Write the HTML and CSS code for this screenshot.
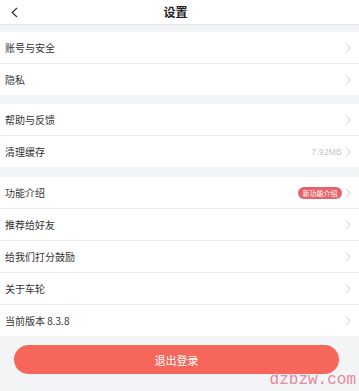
FILE: index.html
```html
<!DOCTYPE html>
<html lang="zh">
<head>
<meta charset="utf-8">
<title>设置</title>
<link rel="stylesheet" href="styles.css">
</head>
<body>
<div class="page">
  <header class="header">
    <div class="back">
      <svg width="7" height="11" viewBox="0 0 7 11"><polyline points="6,1 1.2,5.5 6,10" fill="none" stroke="#333" stroke-width="1.2"/></svg>
    </div>
    <div class="title">设置</div>
    <div></div>
  </header>

  <section class="group g1">
    <div class="row"><span class="label">账号与安全</span><span class="right"><svg class="chev" viewBox="0 0 6 10"><polyline points="1,0.5 5,5 1,9.5"/></svg></span></div>
    <div class="row"><span class="label">隐私</span><span class="right"><svg class="chev" viewBox="0 0 6 10"><polyline points="1,0.5 5,5 1,9.5"/></svg></span></div>
  </section>

  <section class="group g2">
    <div class="row"><span class="label">帮助与反馈</span><span class="right"><svg class="chev" viewBox="0 0 6 10"><polyline points="1,0.5 5,5 1,9.5"/></svg></span></div>
    <div class="row"><span class="label">清理缓存</span><span class="right"><span class="value">7.92MB</span><svg class="chev" viewBox="0 0 6 10"><polyline points="1,0.5 5,5 1,9.5"/></svg></span></div>
  </section>

  <section class="group g3">
    <div class="row"><span class="label">功能介绍</span><span class="right"><span class="badge">新功能介绍</span><svg class="chev" viewBox="0 0 6 10"><polyline points="1,0.5 5,5 1,9.5"/></svg></span></div>
    <div class="row"><span class="label">推荐给好友</span><span class="right"><svg class="chev" viewBox="0 0 6 10"><polyline points="1,0.5 5,5 1,9.5"/></svg></span></div>
    <div class="row"><span class="label">给我们打分鼓励</span><span class="right"><svg class="chev" viewBox="0 0 6 10"><polyline points="1,0.5 5,5 1,9.5"/></svg></span></div>
    <div class="row"><span class="label">关于车轮</span><span class="right"><svg class="chev" viewBox="0 0 6 10"><polyline points="1,0.5 5,5 1,9.5"/></svg></span></div>
    <div class="row"><span class="label">当前版本 8.3.8</span><span class="right"><svg class="chev" viewBox="0 0 6 10"><polyline points="1,0.5 5,5 1,9.5"/></svg></span></div>
  </section>

  <div class="btn-wrap"><button class="logout">退出登录</button></div>

  <div class="watermark">dzbzw.com</div>
</div>
</body>
</html>
```

FILE: styles.css
```css
* { box-sizing: border-box; }
html, body { margin: 0; padding: 0; }
body {
  background: #f3f4f6;
  font-family: "Noto Sans CJK SC", "Noto Sans", sans-serif;
  color: #333;
  width: 359px;
  height: 391px;
  overflow: hidden;
}
.page { position: relative; height: 391px; }
.header {
  height: 25px;
  background: #fff;
  border-bottom: 1px solid #e4e4e6;
  display: grid;
  grid-template-columns: 40px 1fr 48px;
  align-items: center;
}
.back { display: flex; align-items: center; padding-left: 11px; height: 24px; }
.title {
  text-align: center;
  font-size: 12px;
  font-weight: 700;
  color: #222;
  line-height: 24px;
}
.group { background: #fff; }
.g1 { margin-top: 7px; }
.g2 { margin-top: 9px; }
.g3 { margin-top: 10px; }
.row {
  height: 32px;
  display: flex;
  align-items: center;
  justify-content: space-between;
  padding: 0 8px 0 5px;
  border-bottom: 1px solid #ebebed;
}
.row:last-child { height: 31px; border-bottom: none; }
.label { font-size: 10px; color: #333; line-height: 1; }
.right { display: flex; align-items: center; gap: 3px; }
.value { font-size: 8.5px; color: #c4c4c4; font-family: "Liberation Sans", sans-serif; letter-spacing: 0.2px; }
.badge {
  background: #e8616a;
  color: #fff;
  font-size: 7px;
  line-height: 12px;
  height: 12px;
  padding: 0 4.5px;
  border-radius: 6px;
}
.chev {
  display: block;
  width: 6px;
  height: 10px;
  fill: none;
  stroke: #cbcbcb;
  stroke-width: 0.9;
}
.btn-wrap { padding: 9px 20px 0 14px; }
.logout {
  display: block;
  width: 100%;
  height: 29px;
  border: none;
  border-radius: 15px;
  background: #f6665a;
  color: #fff;
  font-family: "Noto Sans CJK SC", sans-serif;
  font-size: 11px;
  padding: 0;
}
.watermark {
  position: absolute;
  right: 3px;
  bottom: 3px;
  font-family: "Liberation Mono", monospace;
  font-size: 16px;
  line-height: 16px;
  color: #e6899c;
}
```
